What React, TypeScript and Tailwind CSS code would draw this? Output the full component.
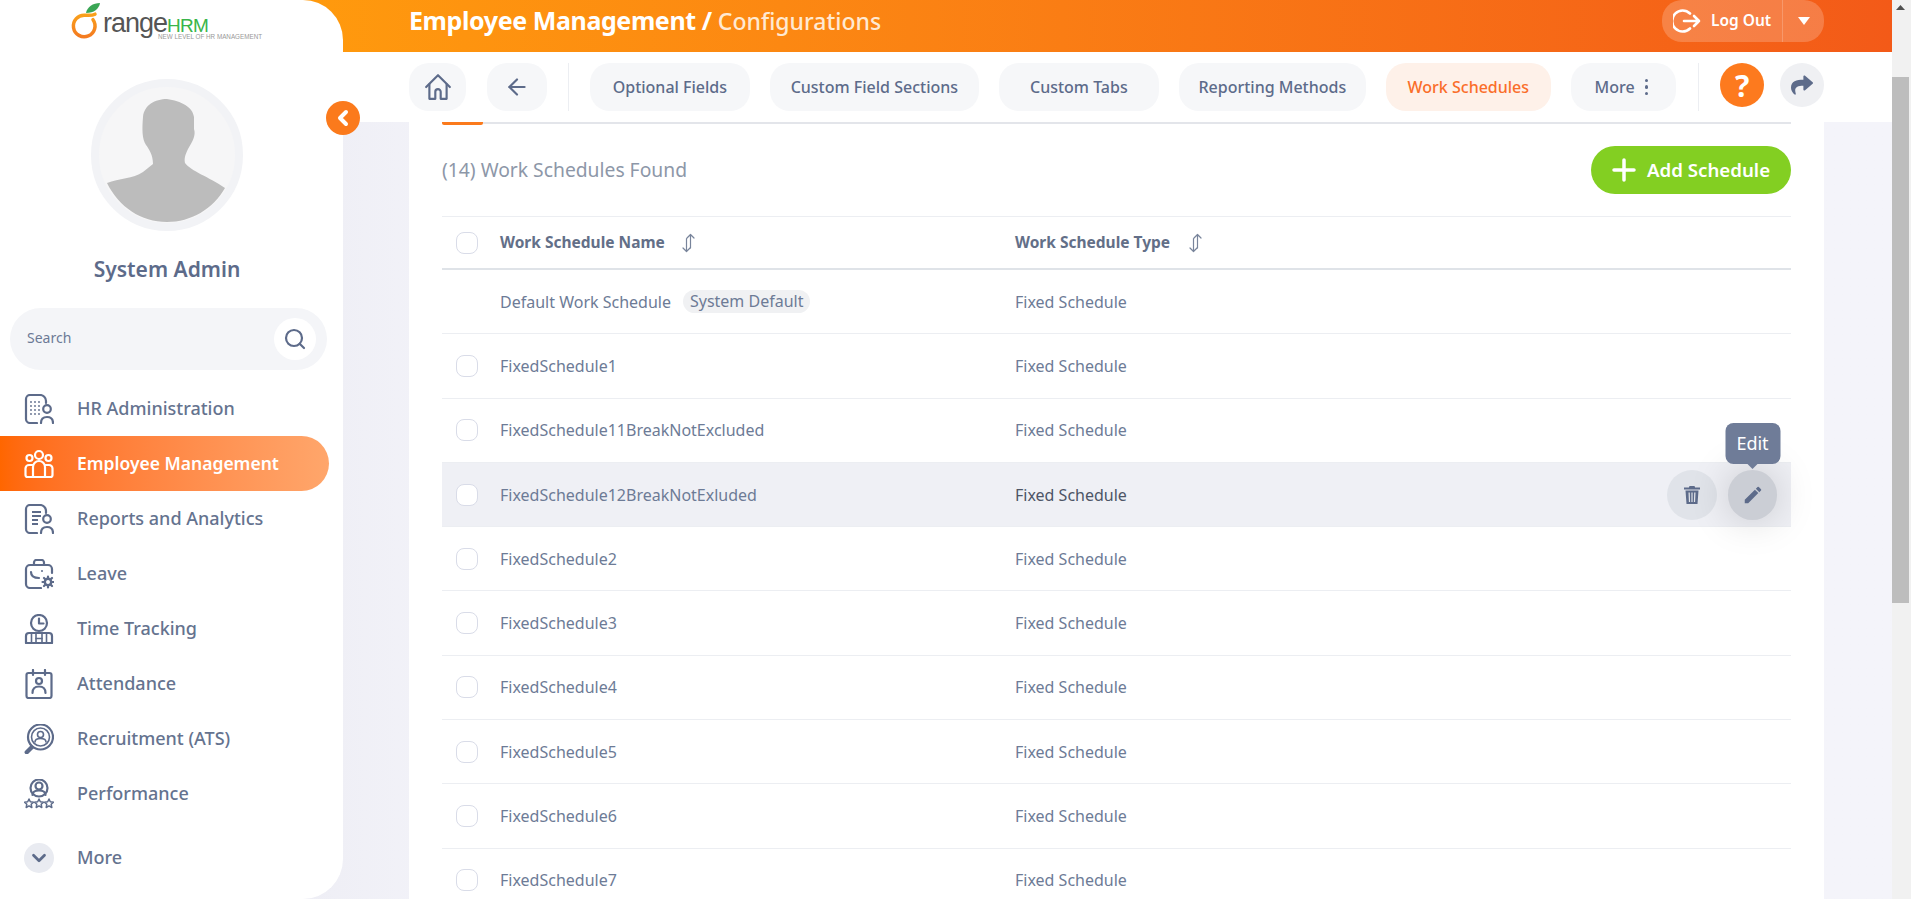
import React from 'react'
import { ArrowLeft, ChevronDown, ChevronLeft, Search } from 'lucide-react'
import { FaShare } from 'react-icons/fa'
import { MdEdit } from 'react-icons/md'

const font = { fontFamily: '"Noto Sans", sans-serif' }

function Icon({ children }: { children: React.ReactNode }) {
  return (
    <svg viewBox="0 0 30 30" fill="none" stroke="currentColor" strokeWidth="2.200" strokeLinecap="round" strokeLinejoin="round" className="h-[30px] w-[30px] shrink-0">
      {children}
    </svg>
  )
}

const dots = [7, 11, 15].flatMap((x) => [8, 12, 16, 20].map((y) => [x, y]))

const navItems: { label: string; active?: boolean; icon: React.ReactNode }[] = [
  {
    label: 'HR Administration',
    icon: (
      <>
        <path d="M13 29H6a4 4 0 0 1-4-4V5a4 4 0 0 1 4-4h10a6 6 0 0 1 6 6v2" />
        {dots.map(([x, y]) => (
          <circle key={`${x}-${y}`} cx={x} cy={y} r="0.9" fill="currentColor" stroke="none" />
        ))}
        <circle cx="23" cy="15" r="3.800" />
        <path d="M17 29c0-4 2.500-6 6-6s6 2 6 6" />
      </>
    ),
  },
  {
    label: 'Employee Management',
    active: true,
    icon: (
      <>
        <circle cx="15" cy="6" r="4" />
        <circle cx="5.500" cy="9" r="3" />
        <circle cx="24.500" cy="9" r="3" />
        <path d="M9 28V18a6 6 0 0 1 12 0v10" />
        <path d="M9 16H5a3.500 3.500 0 0 0-3.500 3.500V26a2 2 0 0 0 2 2h23a2 2 0 0 0 2-2v-6.500A3.500 3.500 0 0 0 25 16h-4" />
      </>
    ),
  },
  {
    label: 'Reports and Analytics',
    icon: (
      <>
        <path d="M13 29H6a4 4 0 0 1-4-4V5a4 4 0 0 1 4-4h10a6 6 0 0 1 6 6v2" />
        <path d="M8 8h9M8 12h9M8 16h6M8 20h6" strokeWidth="2.200" strokeLinecap="butt" />
        <circle cx="23" cy="15" r="3.800" />
        <path d="M17 29c0-4 2.500-6 6-6s6 2 6 6" />
      </>
    ),
  },
  {
    label: 'Leave',
    icon: (
      <>
        <path d="M10 5V3.500A2.500 2.500 0 0 1 12.500 1h5A2.500 2.500 0 0 1 20 3.500V5" />
        <path d="M17 29H6a4 4 0 0 1-4-4V10a4 4 0 0 1 4-4h18a4 4 0 0 1 4 4v4" />
        <path d="M7 13c0 4 3 6 8 6" />
        <circle cx="18" cy="12" r="1" fill="currentColor" stroke="none" />
        <circle cx="24" cy="23" r="3.200" strokeWidth="2.400" />
        <path d="M24 17.500v2M24 26.500v2M18.500 23h2M27.500 23h2M20 19l1.500 1.500M26.500 25.500L28 27M28 19l-1.500 1.500M21.500 25.500L20 27" strokeWidth="2.200" />
      </>
    ),
  },
  {
    label: 'Time Tracking',
    icon: (
      <>
        <circle cx="15" cy="9" r="8" />
        <path d="M15 4.500V9.500h4.500" />
        <path d="M7 19H5a3 3 0 0 0-3 3v7h26v-7a3 3 0 0 0-3-3h-2M7 19h16" />
        <path d="M7.500 20v9M12 20v9M18 20v9M22.500 20v9" strokeWidth="1.600" />
        <path d="M12 24.500h6" strokeWidth="1.600" />
      </>
    ),
  },
  {
    label: 'Attendance',
    icon: (
      <>
        <rect x="2.500" y="4" width="25" height="25" rx="2" />
        <path d="M9 1v5M21 1v5" />
        <circle cx="15" cy="12" r="3" />
        <path d="M8.500 24c0-4 2.500-6.500 6.500-6.500s6.500 2.500 6.500 6.500" />
      </>
    ),
  },
  {
    label: 'Recruitment (ATS)',
    icon: (
      <>
        <circle cx="16.500" cy="13" r="12.500" />
        <circle cx="16.500" cy="13" r="9" strokeWidth="1.600" />
        <circle cx="16.500" cy="10.500" r="3" strokeWidth="1.600" />
        <path d="M11 18c0-2.500 2.500-3.500 5.500-3.500S22 15.500 22 18" strokeWidth="1.600" />
        <path d="M7.500 22L2 27.500a1 1 0 0 0 1.500 1.500L9 23.500" />
      </>
    ),
  },
  {
    label: 'Performance',
    icon: (
      <>
        <circle cx="15" cy="9" r="8.500" />
        <circle cx="15" cy="7" r="3.500" />
        <path d="M8.500 16c0-3 3-4.500 6.500-4.500s6.500 1.500 6.500 4.500" />
        {[5, 15, 25].map((x) => (
          <path key={x} d={`M${x} 20l1.300 2.800 3.200.400-2.300 2.100.600 3.200-2.800-1.600-2.800 1.600.600-3.200-2.300-2.100 3.200-.400z`} strokeWidth="1.500" />
        ))}
      </>
    ),
  },
]

const tabs = [
  { label: 'Optional Fields', w: 'w-[160px]' },
  { label: 'Custom Field Sections', w: 'w-[209px]' },
  { label: 'Custom Tabs', w: 'w-[160px]' },
  { label: 'Reporting Methods', w: 'w-[187px]' },
]

const rows = [
  'Default Work Schedule',
  'FixedSchedule1',
  'FixedSchedule11BreakNotExcluded',
  'FixedSchedule12BreakNotExluded',
  'FixedSchedule2',
  'FixedSchedule3',
  'FixedSchedule4',
  'FixedSchedule5',
  'FixedSchedule6',
  'FixedSchedule7',
]

function Logo() {
  return (
    <div className="relative ml-[60px] flex h-[45px] w-[210px] shrink-0 items-start" style={{ fontFamily: '"Liberation Sans", sans-serif' }}>
      <svg viewBox="0 0 43 45" className="h-[45px] w-[43px] shrink-0">
        <defs>
          <linearGradient id="ring" x1="0" y1="0" x2="0" y2="1">
            <stop offset="0" stopColor="#f9a11b" />
            <stop offset="1" stopColor="#f47b20" />
          </linearGradient>
        </defs>
        <path d="M25 15.200a10.800 10.800 0 1 0 8 4.500M25 15.200c4 0 7 .500 10-1" fill="none" stroke="url(#ring)" strokeWidth="3.500" strokeLinecap="round" />
        <path d="M26 13c1-6 7-10 14-10-1 6-6 10-14 10z" fill="#3aa655" />
      </svg>
      <div className="flex items-baseline pt-[5px]">
        <span className="text-[27px] leading-[36px] tracking-[-1px] text-[#555]">range</span>
        <span className="text-[19px] leading-[36px] tracking-[-0.700px] text-[#39b54a]">HRM</span>
      </div>
      <span className="absolute left-[98px] top-[33px] whitespace-nowrap text-[6.300px] leading-[8px] text-[#999]">NEW LEVEL OF HR MANAGEMENT</span>
    </div>
  )
}

function Avatar() {
  return (
    <div className="ml-[91px] mt-[34px] h-[152px] w-[152px] shrink-0 rounded-full border-[8px] border-[#f2f3f6] bg-[#f6f6f7]">
      <svg viewBox="0 0 152 152" className="-m-[8px] h-[152px] w-[152px]">
        <path d="M16 104C28 99 42 100 52 93L62 85C62 76 58 70 55 66C51 60 51 50 52 38C53 26 64 20 76 20C90 22 102 28 103 38L103 50C105 56 102 62 97 70C94 76 93 80 94 84C100 92 118 98 134 109C122 130 100 143 76 143C50 143 28 128 16 104Z" fill="#bcbcbc" />
      </svg>
    </div>
  )
}

function SortIcon() {
  return (
    <svg viewBox="0 0 15 20" fill="none" stroke="#78849b" strokeWidth="1.200" strokeLinecap="round" strokeLinejoin="round" className="h-[20px] w-[15px]">
      <path d="M9.500 15V1.500M6 5l3.500-3.500L13 5" />
      <path d="M5.500 5.500V18.500M2 15l3.500 3.500L9 15" />
    </svg>
  )
}

export default function App() {
  return (
    <div style={font} className="relative flex h-[899px] w-full overflow-hidden bg-[#f4f4fa] text-[#5d6b8a]">
      {/* Sidebar */}
      <aside className="relative z-10 flex h-full w-[343px] shrink-0 flex-col rounded-r-[40px] bg-white">
        <Logo />
        <Avatar />
        <div className="mt-[23px] h-[30px] w-[334px] text-center text-[21px] font-semibold leading-[30px]">System Admin</div>
        <div className="ml-[10px] mt-[24px] flex h-[62px] w-[317px] shrink-0 items-center justify-between rounded-full bg-[#f4f5f8] pl-[17px] pr-[11px]">
          <span className="-mt-[3px] text-[14px] text-[#6c7a96]">Search</span>
          <div className="flex h-[42px] w-[42px] items-center justify-center rounded-full bg-white">
            <Search className="h-[24px] w-[24px]" strokeWidth={2.2} />
          </div>
        </div>
        <nav className="mt-[11px] flex flex-col">
          {navItems.map((item) => (
            <div
              key={item.label}
              className={
                item.active
                  ? 'flex h-[55px] w-[329px] items-center gap-[23px] rounded-r-full bg-gradient-to-r from-[#ff6600] to-[#ffa66b] pl-[24px] text-white'
                  : 'flex h-[55px] items-center gap-[23px] pl-[24px]'
              }
            >
              <Icon>{item.icon}</Icon>
              <span className={item.active ? 'text-[17.500px] font-semibold' : 'text-[18px] font-medium text-[#65738f]'}>{item.label}</span>
            </div>
          ))}
          <div className="mt-[9px] flex h-[55px] items-center gap-[23px] pl-[24px]">
            <div className="flex h-[30px] w-[30px] items-center justify-center rounded-full bg-[#e9ebf1]">
              <ChevronDown className="h-[22px] w-[22px]" strokeWidth={3} />
            </div>
            <span className="text-[18px] font-medium text-[#65738f]">More</span>
          </div>
        </nav>
      </aside>

      {/* Collapse toggle */}
      <div className="absolute left-[326px] top-[101px] z-20 flex h-[34px] w-[34px] items-center justify-center rounded-full bg-[#fb7a1c] text-white">
        <ChevronLeft className="h-[24px] w-[24px]" strokeWidth={4} />
      </div>

      {/* Main */}
      <main className="-ml-[40px] flex h-full min-w-0 flex-1 flex-col bg-gradient-to-r from-[#eeeef5] to-[#f4f4fa] to-[12%]">
        <header className="flex h-[52px] shrink-0 items-center justify-between bg-gradient-to-r from-[#ff9a0d] to-[#f35a18] pl-[106px] pr-[68px] text-white">
          <div className="-mt-[12px] text-[25px] font-bold leading-[40px] tracking-[-0.400px]">
            Employee Management / <span className="text-[23px] font-medium tracking-normal text-[#ffe9d2]">Configurations</span>
          </div>
          <div className="-mt-[10px] flex h-[42px] w-[162px] items-center rounded-[20px] bg-white/20">
            <div className="flex h-full w-[121px] items-center gap-[10px] border-r border-white/20 pl-[11px]">
              <svg viewBox="0 0 28 28" fill="none" stroke="white" strokeWidth="2.600" strokeLinecap="round" strokeLinejoin="round" className="h-[28px] w-[28px] shrink-0">
                <path d="M17 6.500A10.500 10.500 0 1 0 17 21.500" />
                <path d="M11 14h15M21 9l5 5-5 5" />
              </svg>
              <span className="text-[15.500px] font-semibold">Log Out</span>
            </div>
            <div className="flex flex-1 items-center justify-center">
              <svg viewBox="0 0 12 8" className="h-[8px] w-[12px]" fill="white"><path d="M0 0h12L6 8z" /></svg>
            </div>
          </div>
        </header>

        <div className="flex h-[70px] shrink-0 items-center bg-white pl-[106px] pr-[68px]">
          <div className="flex h-12 w-[58px] items-center justify-center rounded-[20px] bg-[#f6f7f9]">
            <svg viewBox="0 0 26 26" fill="none" stroke="currentColor" strokeWidth="2" strokeLinecap="round" strokeLinejoin="round" className="h-[28px] w-[28px]">
              <path d="M2 13L13 2l11 11" />
              <path d="M5 10.500V24h5.500v-6.500a2.500 2.500 0 0 1 5 0V24H21V10.500" />
            </svg>
          </div>
          <div className="ml-[21px] flex h-12 w-[60px] items-center justify-center rounded-[20px] bg-[#f6f7f9]">
            <ArrowLeft className="h-[26px] w-[26px]" strokeWidth={2} />
          </div>
          <div className="mx-[21px] h-12 w-px bg-[#eceef2]" />
          <div className="flex gap-[20px]">
            {tabs.map((t) => (
              <div key={t.label} className={`flex h-12 items-center justify-center rounded-[20px] bg-[#f6f7f9] text-[16px] font-medium ${t.w}`}>
                {t.label}
              </div>
            ))}
            <div className="flex h-12 w-[165px] items-center justify-center rounded-[20px] bg-[#fef1e9] text-[16px] font-medium text-[#fa6e2a]">
              Work Schedules
            </div>
            <div className="flex h-12 w-[105px] items-center justify-center gap-[10px] rounded-[20px] bg-[#f6f7f9] pr-[4px] text-[16px] font-medium">
              More
              <span className="flex flex-col gap-[3px]">
                <i className="h-[3.500px] w-[3.500px] rounded-full bg-current" />
                <i className="h-[3.500px] w-[3.500px] rounded-full bg-current" />
                <i className="h-[3.500px] w-[3.500px] rounded-full bg-current" />
              </span>
            </div>
          </div>
          <div className="ml-[22px] h-12 w-px bg-[#eceef2]" />
          <div className="-mt-[4px] ml-[21px] flex h-[44px] w-[45px] items-center justify-center rounded-full bg-[#fd7a1e] text-[30px] font-bold text-white">?</div>
          <div className="-mt-[4px] ml-[16px] flex h-[44px] w-[44px] items-center justify-center rounded-full bg-[#eff0f3]">
            <FaShare className="h-[22px] w-[22px]" />
          </div>
        </div>

        {/* Table card */}
        <div className="ml-[106px] mr-[68px] min-h-0 flex-1 overflow-hidden bg-white px-[33px]">
          <div className="h-[2px] bg-[#e3e5ea]">
            <div className="h-[3px] w-[41px] rounded-b-[2px] bg-[#fb7a1c]" />
          </div>
          <div className="flex h-[92px] items-center justify-between">
            <span className="text-[19.300px] text-[#8d97a8]">(14) Work Schedules Found</span>
            <div className="flex h-12 w-[200px] items-center justify-center gap-[11px] rounded-full bg-[#83cf22] text-[18.700px] font-semibold text-white">
              <svg viewBox="0 0 24 24" className="h-[24px] w-[24px]" stroke="white" strokeWidth="3.500" strokeLinecap="round"><path d="M12 2v20M2 12h20" /></svg>
              Add Schedule
            </div>
          </div>
          <div className="flex h-[54px] items-center border-b-2 border-t border-b-[#dfe3e8] border-t-[#eceef2] text-[15.500px] font-bold text-[#636f88]">
            <div className="ml-[14px] h-[22px] w-[22px] rounded-[8px] border border-[#d9dce8]" />
            <div className="ml-[22px] flex w-[515px] items-center gap-[16px]">
              Work Schedule Name
              <SortIcon />
            </div>
            <div className="flex items-center gap-[18px]">
              Work Schedule Type
              <SortIcon />
            </div>
          </div>
          {rows.map((name, i) => (
            <div
              key={name}
              className={`relative flex h-[64.300px] items-center border-b border-[#eceef2] text-[16px] ${i === 3 ? 'bg-[#eff0f5]' : ''}`}
            >
              {i === 0 ? (
                <div className="ml-[14px] h-[22px] w-[22px]" />
              ) : (
                <div className={`ml-[14px] h-[22px] w-[22px] rounded-[8px] border border-[#d9dce8] ${i === 3 ? 'bg-white' : ''}`} />
              )}
              <div className="ml-[22px] flex w-[515px] items-center gap-[12px] text-[#6d7b96]">
                {name}
                {i === 0 && <span className="rounded-full bg-[#f0f1f3] px-[7px] leading-[23px]">System Default</span>}
              </div>
              <div className={i === 3 ? 'text-[#4d5566]' : 'text-[#6d7b96]'}>Fixed Schedule</div>
              {i === 3 && (
                <div className="ml-auto mr-[14px] flex gap-[11px]">
                  <div className="flex h-[50px] w-[50px] items-center justify-center rounded-full bg-[#e0e3e9]">
                    <svg viewBox="0 0 16 18" className="h-[18px] w-[16px]" fill="currentColor">
                      <path d="M5.500 0h5l.600 1.500H16V3.500H0V1.500h4.900zM1.500 4.500h13l-1 13.500h-11zM4.500 6.500l.400 9.500h1.200L5.800 6.500zM7.400 6.500V16h1.200V6.500zM10.200 6.500L9.900 16h1.200l.400-9.500z" fillRule="evenodd" />
                    </svg>
                  </div>
                  <div className="relative flex h-[50px] w-[49px] items-center justify-center rounded-full bg-[#cbced5] shadow-[0_0_40px_rgba(0,0,0,0.18)]">
                    <MdEdit className="h-[22px] w-[22px]" />
                    <div className="absolute -top-[47px] left-1/2 flex h-[41px] w-[55px] -translate-x-1/2 items-center justify-center rounded-[8px] bg-[#6f7c98] text-[18px] text-white">
                      Edit
                      <span className="absolute -bottom-[5px] left-1/2 h-0 w-0 -translate-x-1/2 border-x-[6px] border-t-[6px] border-x-transparent border-t-[#6f7c98]" />
                    </div>
                  </div>
                </div>
              )}
            </div>
          ))}
        </div>
      </main>

      {/* Scrollbar */}
      <div className="flex h-full w-[19px] shrink-0 flex-col bg-[#f1f1f1] pr-[2px]">
        <svg viewBox="0 0 17 17" className="h-[17px] w-[17px]" fill="#505050"><path d="M8.500 5L13 10H4z" /></svg>
        <div className="mt-[60px] h-[526px] bg-[#bdbdbd]" />
      </div>
    </div>
  )
}
